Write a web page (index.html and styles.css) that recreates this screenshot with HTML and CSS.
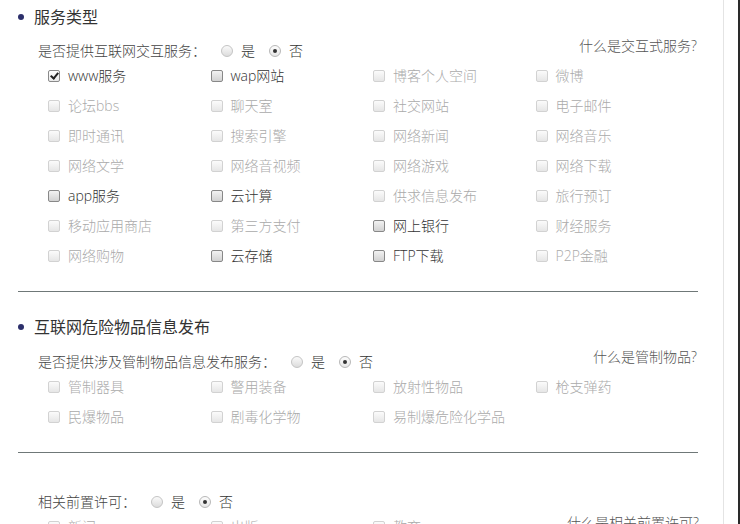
FILE: index.html
```html
<!DOCTYPE html>
<html lang="zh-CN">
<head>
<meta charset="utf-8">
<title>服务类型</title>
<link rel="stylesheet" href="styles.css">
</head>
<body>
<div class="page">
  <div class="panel">
    <div class="content">
      <section class="sec sec-first">
        <h2 class="sec-title"><span class="dot"></span>服务类型</h2>
        <div class="q-row">
          <div class="question">
            <span class="q-label">是否提供互联网交互服务：</span>
            <span class="radio"></span><span class="r-text">是</span>
            <span class="radio on"></span><span class="r-text">否</span>
          </div>
          <a class="help">什么是交互式服务?</a>
        </div>
        <div class="grid">
          <label class="item"><span class="cb checked"></span>www服务</label>
          <label class="item"><span class="cb"></span>wap网站</label>
          <label class="item dis"><span class="cb"></span>博客个人空间</label>
          <label class="item dis"><span class="cb"></span>微博</label>

          <label class="item dis"><span class="cb"></span>论坛bbs</label>
          <label class="item dis"><span class="cb"></span>聊天室</label>
          <label class="item dis"><span class="cb"></span>社交网站</label>
          <label class="item dis"><span class="cb"></span>电子邮件</label>

          <label class="item dis"><span class="cb"></span>即时通讯</label>
          <label class="item dis"><span class="cb"></span>搜索引擎</label>
          <label class="item dis"><span class="cb"></span>网络新闻</label>
          <label class="item dis"><span class="cb"></span>网络音乐</label>

          <label class="item dis"><span class="cb"></span>网络文学</label>
          <label class="item dis"><span class="cb"></span>网络音视频</label>
          <label class="item dis"><span class="cb"></span>网络游戏</label>
          <label class="item dis"><span class="cb"></span>网络下载</label>

          <label class="item"><span class="cb"></span>app服务</label>
          <label class="item"><span class="cb"></span>云计算</label>
          <label class="item dis"><span class="cb"></span>供求信息发布</label>
          <label class="item dis"><span class="cb"></span>旅行预订</label>

          <label class="item dis"><span class="cb"></span>移动应用商店</label>
          <label class="item dis"><span class="cb"></span>第三方支付</label>
          <label class="item"><span class="cb"></span>网上银行</label>
          <label class="item dis"><span class="cb"></span>财经服务</label>

          <label class="item dis"><span class="cb"></span>网络购物</label>
          <label class="item"><span class="cb"></span>云存储</label>
          <label class="item"><span class="cb"></span>FTP下载</label>
          <label class="item dis"><span class="cb"></span>P2P金融</label>
        </div>
      </section>

      <hr class="sep">

      <section class="sec sec-second">
        <h2 class="sec-title"><span class="dot"></span>互联网危险物品信息发布</h2>
        <div class="q-row">
          <div class="question">
            <span class="q-label">是否提供涉及管制物品信息发布服务：</span>
            <span class="radio"></span><span class="r-text">是</span>
            <span class="radio on"></span><span class="r-text">否</span>
          </div>
          <a class="help">什么是管制物品?</a>
        </div>
        <div class="grid">
          <label class="item dis"><span class="cb"></span>管制器具</label>
          <label class="item dis"><span class="cb"></span>警用装备</label>
          <label class="item dis"><span class="cb"></span>放射性物品</label>
          <label class="item dis"><span class="cb"></span>枪支弹药</label>

          <label class="item dis"><span class="cb"></span>民爆物品</label>
          <label class="item dis"><span class="cb"></span>剧毒化学物</label>
          <label class="item dis"><span class="cb"></span>易制爆危险化学品</label>
        </div>
      </section>

      <hr class="sep">

      <section class="sec sec-third">
        <div class="q-row">
          <div class="question">
            <span class="q-label">相关前置许可：</span>
            <span class="radio"></span><span class="r-text">是</span>
            <span class="radio on"></span><span class="r-text">否</span>
          </div>
        </div>
        <div class="grid">
          <label class="item dis"><span class="cb"></span>新闻</label>
          <label class="item dis"><span class="cb"></span>出版</label>
          <label class="item dis"><span class="cb"></span>教育</label>
          <a class="help help-cell">什么是相关前置许可?</a>
        </div>
      </section>
    </div>
  </div>
</div>
</body>
</html>
```

FILE: styles.css
```css
html, body {
  margin: 0;
  padding: 0;
  background: #fff;
}

body {
  font-family: "Open Sans", "Noto Sans CJK SC", "Noto Sans", sans-serif;
  font-size: 14px;
  font-weight: 300;
  color: #333;
}

.page {
  width: 738px;
  height: 524px;
  border-right: 2px solid #2a2a2a;
  overflow: hidden;
}

.panel {
  width: 723px;
  height: 100%;
  border-right: 1px solid #e4e4e4;
}

.content {
  padding: 5px 25px 0 18px;
}

.sec-title {
  margin: 0;
  height: 24px;
  line-height: 24px;
  font-size: 16px;
  font-weight: normal;
  color: #333;
  display: flex;
  align-items: center;
}

.dot {
  width: 6px;
  height: 6px;
  border-radius: 50%;
  background: #2c2f6b;
  margin: 0 10px 0 0;
  flex: none;
}

.q-row {
  margin-top: 12px;
  height: 20px;
  display: flex;
  justify-content: space-between;
  align-items: flex-start;
  padding-left: 20px;
}

.question {
  display: flex;
  align-items: center;
  height: 20px;
  line-height: 20px;
  color: #444;
}

.q-label {
  margin-right: 15px;
}

.radio {
  width: 10px;
  height: 10px;
  border-radius: 50%;
  border: 1px solid #c4c4c4;
  background: linear-gradient(#fafafa, #dcdcdc);
  margin-right: 8px;
  position: relative;
  flex: none;
}

.radio.on {
  background: linear-gradient(#fdfdfd, #e6e6e6);
  border-color: #b8b8b8;
}

.radio.on::after {
  content: "";
  position: absolute;
  left: 3px;
  top: 3px;
  width: 4px;
  height: 4px;
  border-radius: 50%;
  background: #333;
}

.r-text {
  margin-right: 14px;
  color: #333;
}

.help {
  color: #555;
  line-height: 20px;
  margin-top: -5px;
  margin-right: 1px;
  text-decoration: none;
}

.grid {
  display: grid;
  grid-template-columns: repeat(4, 162.5px);
  grid-auto-rows: 30px;
  padding-left: 30px;
}

.item {
  display: flex;
  align-items: center;
  gap: 8px;
  color: #333;
  line-height: 20px;
  white-space: nowrap;
}

.item.dis {
  color: #aaa;
}

.cb {
  width: 10px;
  height: 10px;
  border: 1px solid #888;
  border-radius: 2px;
  background: linear-gradient(#f2f2f2, #d2d2d2);
  flex: none;
  position: relative;
}

.item.dis .cb {
  border-color: #d2d2d2;
  background: linear-gradient(#fbfbfb, #e6e6e6);
}

.cb.checked {
  background: linear-gradient(#fff, #eaeaea);
  border-color: #8a8a8a;
}

.cb.checked::after {
  content: "";
  position: absolute;
  left: 3px;
  top: 0px;
  width: 3px;
  height: 6px;
  border-right: 2px solid #222;
  border-bottom: 2px solid #222;
  transform: rotate(40deg);
}

.sep {
  margin: 20px 0 0;
  border: 0;
  border-top: 1px solid #6f7878;
  height: 0;
}

.sec-second {
  padding-top: 23px;
}

.sec-second .q-row {
  margin-top: 13px;
}

.sec-third {
  padding-top: 39px;
}

.sec-third .q-row {
  margin-top: 0;
}

.help-cell {
  justify-self: end;
  align-self: center;
  margin-top: -8px;
  margin-right: -1px;
}
```
